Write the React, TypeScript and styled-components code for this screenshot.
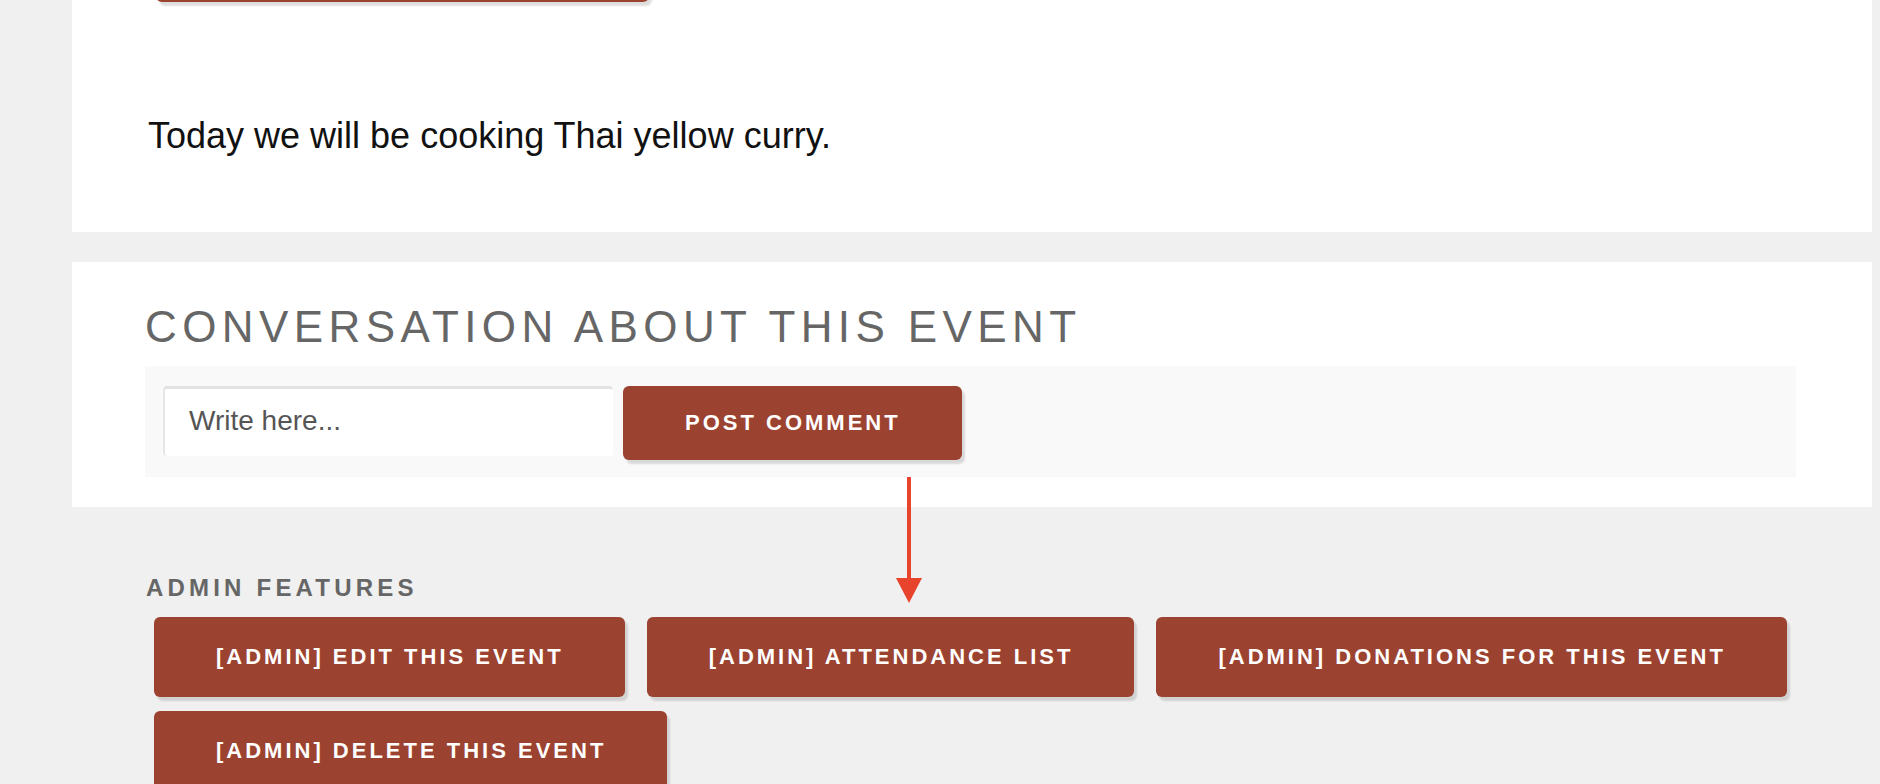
import styled, { createGlobalStyle } from 'styled-components';

const GlobalStyle = createGlobalStyle`
    html,
    body {
        margin: 0;
        padding: 0;
        background: #f0f0f0;
        overflow: hidden;
    }

    body {
        font-family: 'Liberation Sans', Arial, Helvetica, sans-serif;
        color: #111;
    }
`;

// the page is scrolled a little, so the first button only shows its bottom edge
const Page = styled.div`
    position: relative;
    margin-top: -100px;
    padding-left: 72px;
    width: 1800px;
`;

const Panel = styled.section<{ $top: number; $bottom: number; $left: number }>`
    background: #fff;
    padding: ${(p) => p.$top}px 76px ${(p) => p.$bottom}px ${(p) => p.$left}px;

    & + & {
        margin-top: 30px;
    }
`;

const ButtonHolder = styled.div`
    padding-left: 8px;
`;

const RedButton = styled.button<{ $height: number }>`
    box-sizing: border-box;
    height: ${(p) => p.$height}px;
    padding: 0 61px 0 62px;
    background: #9c4230;
    color: #fff;
    border: none;
    border-radius: 6px;
    box-shadow: 3px 4px 2px rgba(0, 0, 0, 0.13);
    font-family: 'Liberation Sans', Arial, Helvetica, sans-serif;
    font-size: 22px;
    font-weight: bold;
    letter-spacing: 3px;
    text-transform: uppercase;
    white-space: nowrap;
    cursor: pointer;
`;

const Description = styled.p`
    margin: 107px 0 0;
    font-size: 36px;
    line-height: 54px;
    color: #111;
`;

const Title = styled.h2`
    margin: 0 0 14px;
    font-size: 44px;
    font-weight: normal;
    line-height: 50px;
    letter-spacing: 5.4px;
    color: #666;
    text-transform: uppercase;
`;

const CommentForm = styled.form`
    display: flex;
    align-items: flex-start;
    gap: 10px;
    background: #f9f9f9;
    padding: 20px 18px 17px;
`;

const CommentInput = styled.input`
    box-sizing: border-box;
    width: 450px;
    height: 70px;
    border: none;
    border-top: 3px solid #e2e2e2;
    border-left: 2px solid #e6e6e6;
    border-radius: 4px;
    padding: 0 0 3px 24px;
    background: #fff;
    font-family: 'Liberation Sans', Arial, Helvetica, sans-serif;
    font-size: 28px;
    color: #555;
    outline: none;

    &::placeholder {
        color: #555;
    }
`;

const AdminSection = styled.section`
    margin-top: 67px;
    padding-left: 74px;
`;

const AdminHeading = styled.h3`
    margin: 0 0 15px;
    font-size: 24px;
    font-weight: bold;
    line-height: 28px;
    letter-spacing: 4.2px;
    color: #666;
    text-transform: uppercase;
`;

const AdminButtons = styled.div`
    display: flex;
    flex-wrap: wrap;
    column-gap: 22px;
    row-gap: 14px;
    padding-left: 8px;
`;

const Annotation = styled.svg`
    position: absolute;
    left: 895px;
    top: 577px;
    pointer-events: none;
`;

const adminActions = [
    '[Admin] Edit this event',
    '[Admin] Attendance list',
    '[Admin] Donations for this event',
    '[Admin] Delete this event',
];

const App = () => {
    return (
        <>
            <GlobalStyle />
            <Page>
                <Panel $top={28} $bottom={69} $left={76}>
                    <ButtonHolder>
                        <RedButton $height={74} type={'button'}>
                            Register for this event
                        </RedButton>
                    </ButtonHolder>
                    <Description>Today we will be cooking Thai yellow curry.</Description>
                </Panel>
                <Panel $top={40} $bottom={30} $left={73}>
                    <Title>Conversation about this event</Title>
                    <CommentForm onSubmit={(e) => e.preventDefault()}>
                        <CommentInput type={'text'} placeholder={'Write here...'} />
                        <RedButton $height={74} type={'submit'}>
                            Post comment
                        </RedButton>
                    </CommentForm>
                </Panel>
                <AdminSection>
                    <AdminHeading>Admin features</AdminHeading>
                    <AdminButtons>
                        {adminActions.map((label) => (
                            <RedButton key={label} $height={80} type={'button'}>
                                {label}
                            </RedButton>
                        ))}
                    </AdminButtons>
                </AdminSection>
                {/* red arrow drawn over the page, pointing at the attendance list */}
                <Annotation width={28} height={128} viewBox={'0 0 28 128'}>
                    <rect x={12} y={0} width={4} height={104} fill={'#e8432d'} />
                    <polygon points={'1,101 27,101 14,126'} fill={'#e8432d'} />
                </Annotation>
            </Page>
        </>
    );
};

export default App;
